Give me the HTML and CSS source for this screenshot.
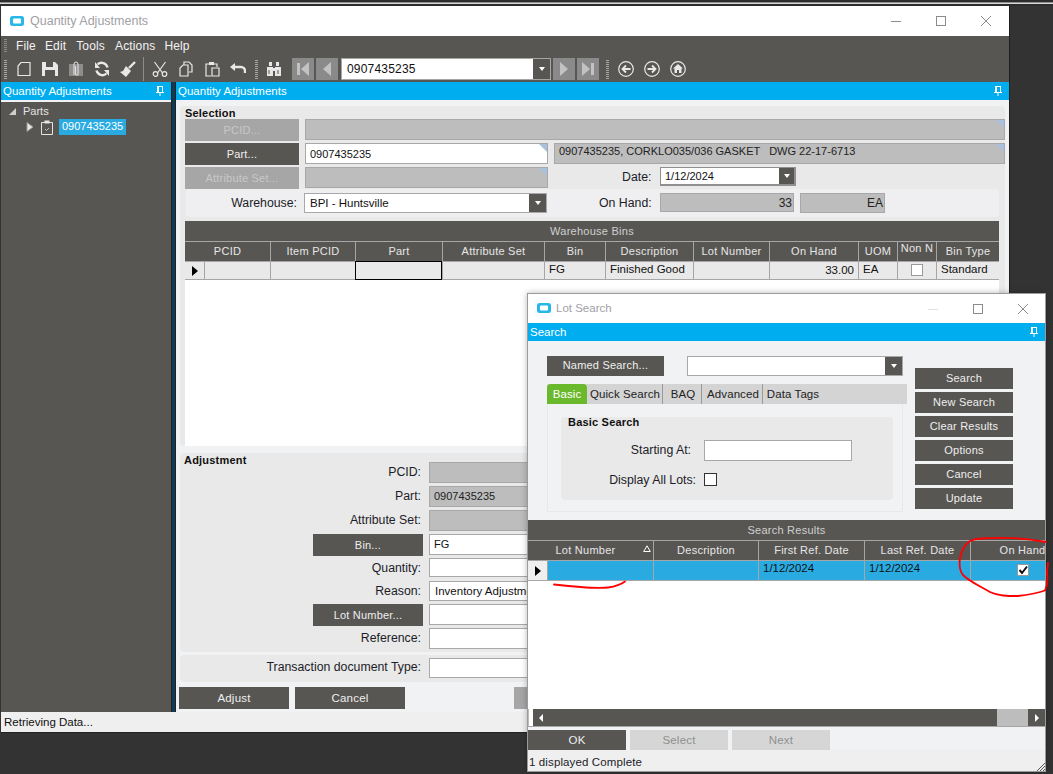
FILE: index.html
```html
<!DOCTYPE html>
<html lang="en">
<head>
<meta charset="utf-8">
<title>Quantity Adjustments</title>
<link rel="stylesheet" href="styles.css">
</head>
<body>
<div class="topstrip"></div>

<section class="win win-main">
  <header class="titlebar">
    <svg class="applogo" viewBox="0 0 14 10"><rect x="0" y="0" width="14" height="10" rx="2.5" fill="#29b6e8"/><rect x="3" y="2.5" width="8" height="5" rx="1" fill="#fff"/></svg>
    <span class="wintitle">Quantity Adjustments</span>
    <div class="wincontrols">
      <svg viewBox="0 0 12 12"><path d="M1 6.5h10" class="wc"/></svg>
      <svg viewBox="0 0 12 12"><rect x="1.5" y="1.5" width="9" height="9" class="wc"/></svg>
      <svg viewBox="0 0 12 12"><path d="M1 1l10 10M11 1L1 11" class="wc"/></svg>
    </div>
  </header>

  <div class="chrome">
    <nav class="menu"><span class="grip-s"></span><span>File</span><span>Edit</span><span>Tools</span><span>Actions</span><span>Help</span></nav>
    <div class="toolbar">
      <span class="grip g1"></span>
      <svg class="ic first" viewBox="0 0 16 16"><path class="ln" d="M5 1.5h9v13H2V5z"/></svg>
      <svg class="ic" viewBox="0 0 16 16"><path class="fl" d="M0 1h13l3 3v11H0z"/><rect x="4" y="1" width="7" height="5" fill="#585653"/><rect x="3" y="9" width="10" height="6" fill="#585653"/></svg>
      <svg class="ic" viewBox="0 0 16 16"><path class="fl2" d="M1 3h14v12H1z"/><path class="ln2" d="M6 14V3a2 2 0 0 1 4 0v10a1.2 1.2 0 0 1-2.400 0V5"/></svg>
      <svg class="ic" viewBox="0 0 16 16"><path class="thick" d="M13.500 6.500A6 6 0 0 0 3.500 3.500M2.500 9.500a6 6 0 0 0 10 3"/><path class="fl" d="M1 1v6h5zM15 15V9h-5z"/></svg>
      <svg class="ic" viewBox="0 0 16 16"><path class="thick" d="M15 1L9 7"/><path class="fl" d="M6 5l5 5-5 6-6-5 3-1z"/></svg>
      <span class="tsep"></span>
      <svg class="ic scis" viewBox="0 0 16 16"><path class="ln" d="M2.500 1l8 11M13.500 1l-8 11"/><circle class="ln" cx="3.500" cy="13" r="2.300"/><circle class="ln" cx="12.500" cy="13" r="2.300"/></svg>
      <svg class="ic" viewBox="0 0 16 16"><path class="ln" d="M6 4V1h5l3 3v7h-3M2 7l3-3h5v11H2z"/></svg>
      <svg class="ic" viewBox="0 0 16 16"><path class="ln" d="M5 3H2v12h5M10 3h3v3"/><rect class="fl" x="5" y="1" width="5" height="3"/><path class="ln" d="M8 7h7v8H8z"/></svg>
      <svg class="ic" viewBox="0 0 16 16"><path class="thick" d="M4 6h7a4 4 0 0 1 4 4v2"/><path class="fl" d="M0 6l5-4v8z"/></svg>
      <span class="grip g2"></span>
      <svg class="ic binoc" viewBox="0 0 16 16"><path class="fl" d="M1 6h6v9H1zM9 6h6v9H9zM3 1h3v4H3zM10 1h3v4h-3zM7 7h2v3H7z"/><path d="M3 9v4M12 9v4" stroke="#585653"/></svg>
      <span class="navbtn nb1"><svg viewBox="0 0 14 14"><rect x="1" y="1" width="3" height="12" class="nf"/><path d="M13 0v14L5 7z" class="nf"/></svg></span>
      <span class="navbtn"><svg viewBox="0 0 14 14"><path d="M11 0v14L3 7z" class="nf"/></svg></span>
      <div class="tcombo"><span class="tcval">0907435235</span><span class="drop"><i></i></span></div>
      <span class="navbtn nb2"><svg viewBox="0 0 14 14"><path d="M3 0v14l8-7z" class="nf"/></svg></span>
      <span class="navbtn"><svg viewBox="0 0 14 14"><path d="M1 0v14l8-7z" class="nf"/><rect x="10" y="1" width="3" height="12" class="nf"/></svg></span>
      <span class="grip g3"></span>
      <svg class="ic g4" viewBox="0 0 16 16"><circle class="ln" cx="8" cy="8" r="7.300"/><path class="arrow" d="M12.500 8H4.500M8 4.500L4.500 8 8 11.500"/></svg>
      <svg class="ic" viewBox="0 0 16 16"><circle class="ln" cx="8" cy="8" r="7.300"/><path class="arrow" d="M3.500 8h8M8 4.500L11.500 8 8 11.500"/></svg>
      <svg class="ic" viewBox="0 0 16 16"><circle class="ln" cx="8" cy="8" r="7.300"/><path class="fl" d="M8 3l5 4.500h-1.500V12H9V9H7v3H4.500V7.500H3z"/></svg>
    </div>
  </div>

  <div class="mainbody">
    <aside class="side">
      <div class="dockhead"><span>Quantity Adjustments</span><svg class="pin" viewBox="0 0 8 10"><path d="M1 0h6v6H6V1H3v5H1zM0 6h8v1H0zM3.500 7h1v3h-1z" fill="#fff"/></svg></div>
      <div class="sideline"></div>
      <div class="tree">
        <div class="tnode"><i class="tri-open"></i><span>Parts</span></div>
        <div class="tnode tchild">
          <svg class="texp" viewBox="0 0 8 10"><path d="M1 .5v9l6-4.500z" fill="#e8e8e8" stroke="#999"/></svg>
          <svg class="ticon" viewBox="0 0 12 15"><path d="M.5 2.500h11v12H.5z" fill="none" stroke="#e4e4e4"/><rect x="3.500" y="0.500" width="5" height="3" fill="#e4e4e4"/><path d="M4 9l1.500 1.500L8 8" fill="none" stroke="#bbb"/></svg>
          <span class="tsel">0907435235</span>
        </div>
      </div>
    </aside>
    <div class="divider"></div>
    <main class="content">
      <div class="dockhead"><span>Quantity Adjustments</span><svg class="pin" viewBox="0 0 8 10"><path d="M1 0h6v6H6V1H3v5H1zM0 6h8v1H0zM3.500 7h1v3h-1z" fill="#fff"/></svg></div>
      <div class="pane">
        <section class="group sel">
          <h3 class="gtitle">Selection</h3>
          <div class="selgrid">
            <span class="btn off">PCID...</span>
            <span class="field ro corner span2"></span>
            <span class="btn">Part...</span>
            <span class="field corner partf">0907435235</span>
            <span class="field ro corner descf">0907435235, CORKLO035/036 GASKET &nbsp; DWG 22-17-6713</span>
            <span class="btn off">Attribute Set...</span>
            <span class="field ro corner attrf"></span>
            <div class="daterow"><label>Date:</label><div class="datecombo"><span>1/12/2024</span><span class="drop"><i></i></span></div></div>
          </div>
          <div class="whrow">
            <label class="whlabel">Warehouse:</label>
            <div class="combo whcombo"><span>BPI - Huntsville</span><span class="drop"><i></i></span></div>
            <label class="ohlabel">On Hand:</label>
            <span class="field ro num ohf">33</span>
            <span class="field ro num eaf">EA</span>
          </div>
          <div class="bins">
            <div class="gridtitle">Warehouse Bins</div>
            <div class="gridhead binscols">
              <span class="headfirst">PCID</span><span>Item PCID</span><span>Part</span><span>Attribute Set</span><span>Bin</span><span>Description</span><span>Lot Number</span><span>On Hand</span><span>UOM</span><span class="nonn">Non N</span><span>Bin Type</span>
            </div>
            <div class="gridrow binscols binrow">
              <span class="rowsel"><i></i></span><span></span><span></span><span class="focus"></span><span></span><span class="l">FG</span><span class="l">Finished Good</span><span></span><span class="r">33.00</span><span class="l">EA</span><span class="c"><b class="chk"></b></span><span class="l">Standard</span>
            </div>
            <div class="gridfill"></div>
          </div>
        </section>

        <section class="group adj">
          <h3 class="gtitle">Adjustment</h3>
          <div class="adjgrid">
            <label>PCID:</label><span class="field ro"></span>
            <label>Part:</label><span class="field ro">0907435235</span>
            <label>Attribute Set:</label><span class="field ro"></span>
            <span class="btn adjbtn">Bin...</span><span class="field">FG</span>
            <label>Quantity:</label><span class="field slim"></span>
            <label>Reason:</label><span class="field slim reason">Inventory Adjustment</span>
            <span class="btn adjbtn">Lot Number...</span><span class="field"></span>
            <label>Reference:</label><span class="field"></span>
          </div>
        </section>

        <section class="group trans">
          <label>Transaction document Type:</label><span class="field slim"></span>
        </section>

        <div class="actions">
          <span class="btn act">Adjust</span>
          <span class="btn act">Cancel</span>
          <span class="btn act off third"></span>
        </div>
      </div>
    </main>
  </div>
  <footer class="status">Retrieving Data...</footer>
</section>

<section class="win win-lot">
  <header class="titlebar lotbar">
    <svg class="applogo" viewBox="0 0 14 10"><rect x="0" y="0" width="14" height="10" rx="2.500" fill="#29b6e8"/><rect x="3" y="2.500" width="8" height="5" rx="1" fill="#fff"/></svg>
    <span class="wintitle small">Lot Search</span>
    <div class="wincontrols lotctl">
      <svg viewBox="0 0 12 12"><path d="M1 6.500h10" class="wc faint"/></svg>
      <svg viewBox="0 0 12 12"><rect x="1.500" y="1.500" width="9" height="9" class="wc"/></svg>
      <svg viewBox="0 0 12 12"><path d="M1 1l10 10M11 1L1 11" class="wc"/></svg>
    </div>
  </header>
  <div class="dockhead lothead"><span>Search</span><svg class="pin" viewBox="0 0 8 10"><path d="M1 0h6v6H6V1H3v5H1zM0 6h8v1H0zM3.500 7h1v3h-1z" fill="#fff"/></svg></div>
  <div class="lotform">
    <div class="lotleft">
      <div class="namedrow">
        <span class="btn namedbtn">Named Search...</span>
        <div class="combo namedcombo"><span></span><span class="drop"><i></i></span></div>
      </div>
      <div class="tabs">
        <span class="tab on">Basic</span><span class="tab qs">Quick Search</span><span class="tab baq">BAQ</span><span class="tab adv">Advanced</span><span class="tab dt">Data Tags</span>
      </div>
      <div class="tabpanel">
        <div class="basic">
          <h3 class="gtitle">Basic Search</h3>
          <div class="basicgrid">
            <label class="sa">Starting At:</label><span class="field basicinput"></span>
            <label class="dal">Display All Lots:</label><b class="chk big"></b>
          </div>
        </div>
      </div>
    </div>
    <div class="lotbtns">
      <span class="btn lb">Search</span><span class="btn lb">New Search</span><span class="btn lb">Clear Results</span><span class="btn lb">Options</span><span class="btn lb">Cancel</span><span class="btn lb">Update</span>
    </div>
  </div>
  <div class="results">
    <div class="gridtitle">Search Results</div>
    <div class="gridhead lotcols">
      <span class="headfirst lotnum">Lot Number<svg class="sort" viewBox="0 0 8 7"><path d="M4 .8L7.300 6.500H.7z" fill="none" stroke="#fff"/></svg></span><span>Description</span><span>First Ref. Date</span><span>Last Ref. Date</span><span>On Hand</span>
    </div>
    <div class="gridrow lotcols selrow">
      <span class="rowsel"><i></i></span><span></span><span></span><span class="l">1/12/2024</span><span class="l">1/12/2024</span><span class="c"><b class="chk on"><svg viewBox="0 0 10 10"><path d="M1.500 5l2.500 3 5-6.500" fill="none" stroke="#111" stroke-width="2"/></svg></b></span>
    </div>
    <div class="gridfill"></div>
    <div class="hscroll">
      <span class="sthumb"></span>
      <span class="strack"><i class="al"></i></span>
      <span class="sgray"></span>
      <span class="sright"><i class="ar"></i></span>
    </div>
  </div>
  <div class="lotactions">
    <span class="btn la">OK</span><span class="btn la dim">Select</span><span class="btn la dim">Next</span>
  </div>
  <footer class="lotstatus">1 displayed Complete</footer>
  <svg class="sizegrip" viewBox="0 0 8 8"><path d="M0 8l8-8M3 8l5-5M6 8l2-2" stroke="#555" fill="none"/></svg>
</section>

<svg class="ink" viewBox="0 0 1053 774">
  <path d="M554 584.500C572 586.500 596 589 608 587.500C615 586.500 621 584.500 625 581.500"/>
  <path d="M1046 542C1030 539 1010 537.500 996 538C985 538 975 538 970 541C963 546 961 552 960 558C959 565 959 570 963 575C970 582 980 586 990 592C998 596 1008 596 1018 596C1028 595 1038 593 1045 590.500C1047 586 1048 580 1047 574C1047 570 1048 566 1048 563"/>
</svg>
</body>
</html>
```
FILE: styles.css
```css
* { box-sizing: border-box; }
html, body { margin: 0; height: 100%; }
body {
  background: #333;
  overflow: hidden;
  font: 12px "Liberation Sans", Arial, sans-serif;
  color: #1c1c28;
  position: relative;
  width: 1053px;
  height: 774px;
}
h3 { margin: 0; }
i, b { display: block; font-style: normal; }

.topstrip {
  height: 6px;
  background: linear-gradient(#2c2c2c 0 2px, #8f8f8f 2px 3px, #d8d8d8 3px 4px, #2c2c2c 4px 6px);
}

.win { position: absolute; display: flex; flex-direction: column; }
.win-main {
  left: 1px; top: 6px; width: 1008px; height: 726px;
  background: #f1f2f4;
  box-shadow: 1px 0 0 #1f1f1f, 0 1px 0 #222;
}
.win-lot {
  left: 527px; top: 293px; width: 519px; height: 479px;
  background: #f1f2f4;
  border: 1px solid #9b9b9b;
  box-shadow: 0 0 6px rgba(0,0,0,.28);
}

.titlebar { height: 30px; flex: none; background: #fff; display: flex; align-items: center; padding-left: 9px; }
.applogo { width: 14px; height: 10px; margin-right: 6px; }
.wintitle { font-size: 12.500px; color: #a0a0a6; }
.wintitle.small { font-size: 11.500px; padding-bottom: 2px; }
.wincontrols { margin-left: auto; display: flex; gap: 33px; padding-right: 17px; }
.wincontrols svg { width: 12px; height: 12px; }
.wc { fill: none; stroke: #8c8c8c; stroke-width: 1; }
.wc.faint { stroke: #e2e2e2; }

.chrome { height: 46px; flex: none; background: #585653; color: #f2f2f2; }
.menu { height: 20px; display: flex; align-items: center; padding-left: 3px; font-size: 12px; letter-spacing: .15px; }
.menu span { margin-right: 9px; }
.menu span:nth-child(2) { margin-left: 9px; }
.menu span:nth-child(3) { margin-right: 10px; }
.menu span:nth-child(4) { margin-right: 10px; }
.menu .grip-s { width: 3px; height: 14px; margin-right: 0; background: repeating-linear-gradient(#8a8a8a 0 1px, transparent 1px 2px); }
.toolbar { height: 26px; display: flex; align-items: center; padding-left: 3px; }
.grip { width: 3px; height: 19px; flex: none; background: repeating-linear-gradient(#a8a8a8 0 1px, transparent 1px 2px); }
.g2 { margin-left: 9px; }
.g3 { margin-left: 7px; }
.ic { width: 16px; height: 16px; flex: none; margin-left: 10px; }
.ic.first { margin-left: 9px; }
.ic.scis { margin-left: 8px; }
.ic.binoc { margin-left: 8px; }
.ic.g4 { margin-left: 9px; }
.tsep { width: 1px; height: 24px; background: #8e8c8a; margin-left: 7px; flex: none; }
.ln { fill: none; stroke: #e8e8e8; stroke-width: 1.200; }
.ln2 { fill: none; stroke: #e8e8e8; stroke-width: 1; }
.fl { fill: #e8e8e8; }
.fl2 { fill: #8f8d8b; }
.thick { fill: none; stroke: #e8e8e8; stroke-width: 2.400; }
.arrow { fill: none; stroke: #e8e8e8; stroke-width: 1.800; }
.navbtn { width: 22px; height: 22px; background: #8a8a8a; margin-left: 2px; display: flex; align-items: center; justify-content: center; flex: none; }
.navbtn svg { width: 14px; height: 14px; }
.nf { fill: #c2c2c2; }
.nb1 { margin-left: 10px; }
.nb2 { margin-left: 2px; }
.tcombo { width: 210px; height: 22px; margin-left: 3px; flex: none; display: flex; background: #fff; border: 1px solid #a5a5a5; color: #111; font-size: 12px; }
.tcval { flex: 1; padding: 3px 5px; letter-spacing: .2px; }
.drop { width: 17px; background: #585653; display: flex; align-items: center; justify-content: center; flex: none; }
.drop i { width: 0; height: 0; border: 3.500px solid transparent; border-top: 4px solid #fff; border-bottom: 0; }

.mainbody { flex: 1; min-height: 0; display: flex; }
.side { width: 170px; flex: none; background: #585653; }
.divider { width: 5px; flex: none; background: linear-gradient(90deg, #222 0 1px, #0d3b58 1px 4px, #222 4px); }
.content { flex: 1; min-width: 0; display: flex; flex-direction: column; }
.dockhead {
  height: 18px; flex: none; background: #00adef; color: #fff;
  display: flex; align-items: center; justify-content: space-between;
  padding: 0 7px 0 2px; font-size: 11.500px;
}
.pin { width: 8px; height: 10px; }
.sideline { height: 2px; background: #f1f2f4; }
.tree { color: #e4e4e4; font-size: 11px; padding-top: 1px; }
.tnode { display: flex; align-items: center; height: 16px; padding-left: 8px; }
.tri-open { width: 0; height: 0; border-style: solid; border-width: 0 0 7px 7px; border-color: transparent transparent #cfcfcf transparent; margin-right: 7px; }
.tchild { padding-left: 25px; }
.texp { width: 8px; height: 10px; margin-right: 7px; }
.ticon { width: 12px; height: 15px; margin-right: 6px; }
.tsel { background: #29abe2; color: #fff; height: 16px; padding: 1px 3px; font-size: 11px; width: 67px; }

.pane { flex: 1; min-height: 0; padding: 6px 4px 0; display: flex; flex-direction: column; }
.group { background: #e9e9e9; border-radius: 4px; }
.gtitle { font-size: 11px; font-weight: bold; color: #111; line-height: 12px; letter-spacing: .2px; }
.sel { height: 340px; padding: 1px 0 0 5px; flex: none; }
.selgrid { display: grid; grid-template-columns: 114px 243px 1fr; gap: 2px 6px; }
.span2 { grid-column: span 2; }
.btn {
  display: flex; align-items: center; justify-content: center; padding-bottom: 1px;
  background: #585653; color: #eee; height: 22px; font-size: 11px; letter-spacing: .2px; flex: none;
}
.btn.off { background: #a6a6a6; color: #c8c8c8; }
.field {
  display: block; height: 21px; background: #fff; border: 1px solid #a8a8a8;
  padding: 3px 4px; color: #111; font-size: 11px; line-height: 13px; position: relative; white-space: nowrap; overflow: hidden;
}
.field.ro { background: #bdbdbd; color: #222; }
.field.slim { height: 19px; }
.field.reason { height: 20px; padding-left: 5px; font-size: 11.500px; }
.corner::after {
  content: ""; position: absolute; right: -1px; top: -1px; width: 0; height: 0;
  border-style: solid; border-width: 0 10px 10px 0; border-color: transparent #a9c1df transparent transparent;
}
.partf { padding-top: 4px; }
.descf { padding-top: 1px; }
.daterow { display: flex; align-items: flex-start; }
.daterow label { margin-left: 68px; width: 38px; padding-top: 3px; font-size: 12.300px; }
.datecombo { width: 136px; height: 19px; border: 2px solid #8f8f8f; border-left-width: 1px; border-top-width: 1px; background: #fff; display: flex; color: #111; font-size: 11px; }
.datecombo span:first-child { flex: 1; padding: 2px 4px; }
.datecombo .drop { width: 15px; height: 100%; }
.whrow {
  display: flex; align-items: flex-start; height: 28px; width: 813px; margin: 0 0 4px 1px;
  background: #efeff1; border-radius: 4px; padding-top: 4px; font-size: 12.300px;
}
.whlabel { width: 111px; text-align: right; padding-top: 3px; }
.combo { display: flex; border: 1px solid #a8a8a8; background: #fff; color: #111; height: 20px; }
.combo span:first-child { flex: 1; padding: 3px 5px 1px; font-size: 11.500px; }
.whcombo { width: 243px; margin-left: 7px; }
.whcombo .drop, .namedcombo .drop { width: 17px; }
.ohlabel { margin-left: 52px; width: 61px; white-space: nowrap; padding-top: 3px; }
.ohf { width: 134px; height: 19px; padding-top: 3px; font-size: 12px; }
.num { text-align: right; padding-right: 1px; }
.eaf { width: 85px; height: 20px; margin-left: 6px; padding-top: 3px; font-size: 12px; }

.bins { width: 814px; height: 225px; display: flex; flex-direction: column; background: #fff; }
.gridtitle { height: 20px; background: #585653; color: #cfcfcf; display: flex; align-items: center; justify-content: center; flex: none; font-size: 11px; letter-spacing: .25px; }
.gridhead, .gridrow { display: grid; flex: none; }
.gridhead { height: 20px; background: #585653; color: #e6e6e6; border-top: 1px solid #a6a6a6; font-size: 11px; letter-spacing: .25px; }
.gridhead span { border-left: 1px solid #a6a6a6; display: flex; align-items: center; justify-content: center; white-space: nowrap; overflow: hidden; padding-bottom: 1px; }
.gridhead .headfirst { border-left: 0; grid-column: span 2; }
.gridrow { height: 20px; background: #e9e9e9; border-top: 1px solid #a6a6a6; border-bottom: 1px solid #a6a6a6; color: #111; font-size: 11.500px; }
.binrow { height: 19px; }
.gridrow span { border-left: 1px solid #a6a6a6; display: flex; align-items: center; white-space: nowrap; overflow: hidden; padding: 0 4px; }
.gridrow span:first-child { border-left: 0; }
.gridrow .l { padding-bottom: 3px; }
.gridrow .r { justify-content: flex-end; padding-bottom: 2px; }
.gridrow .c { justify-content: center; padding-bottom: 1px; }
.gridrow .focus { border: 1px solid #000; margin-top: -1px; margin-bottom: -1px; }
.rowsel { justify-content: center; padding: 0 !important; }
.rowsel i { width: 0; height: 0; border-style: solid; border-width: 5px 0 5px 6px; border-color: transparent transparent transparent #000; }
.binscols { grid-template-columns: 19px 66px 85px 87px 102px 61px 88px 76px 89px 39px 39px 63px; }
.nonn { align-items: flex-start !important; }
.chk { width: 12px; height: 12px; background: #fff; border: 1px solid #9a9a9a; }
.chk.big { width: 13px; height: 13px; border-color: #333; }
.chk.on svg { display: block; width: 10px; height: 10px; }
.gridfill { flex: 1; background: #fff; }

.adj { height: 199px; margin-top: 7px; flex: none; padding: 1px 0 0 4px; }
.adjgrid { display: grid; grid-template-columns: 239px 400px; column-gap: 6px; grid-template-rows: 24px 24px 24px 24px 23px 23px 24px 24px; margin-top: -4px; }
.adjgrid label { text-align: right; padding: 3px 2px 0 0; font-size: 12.300px; }
.adjbtn { width: 110px; justify-self: end; }
.trans { height: 27px; margin-top: 3px; display: grid; grid-template-columns: 241px 400px; column-gap: 8px; padding-top: 3px; flex: none; }
.trans label { text-align: right; padding-top: 2px; font-size: 12.300px; }
.trans .field { height: 20px; }
.actions { display: flex; gap: 6px; margin: 5px 0 0 -1px; }
.act { width: 110px; font-size: 11.500px; }
.third { margin-left: 103px; }

.status { height: 20px; flex: none; background: #efefef; padding: 4px 3px; color: #111; font-size: 11.500px; }

.lotbar { height: 29px; padding-left: 9px; }
.lotbar .applogo { margin-right: 5px; margin-bottom: 2px; }
.lotctl { gap: 33px; padding-right: 16px; }
.lothead { padding: 0 7px 0 2px; }
.lotform { height: 179px; flex: none; display: flex; padding-left: 19px; }
.lotleft { width: 360px; padding-top: 15px; }
.namedrow { display: flex; height: 20px; }
.namedbtn { width: 117px; height: 20px; padding-bottom: 2px; }
.namedcombo { width: 216px; margin-left: 23px; }
.tabs { display: flex; height: 20px; margin-top: 8px; background: #d4d4d4; color: #222; align-items: center; }
.tab { display: flex; align-items: center; justify-content: center; height: 20px; letter-spacing: .1px; font-size: 11.500px; padding-bottom: 1px; }
.tab.on { width: 40px; background: #6ab82c; color: #fff; border-radius: 4px 4px 0 0; }
.qs { width: 76px; padding-left: 1px; border-right: 1px solid #9a9a9a; }
.baq { width: 39px; padding-left: 2px; border-right: 1px solid #9a9a9a; }
.adv { width: 61px; padding-left: 2px; border-right: 1px solid #9a9a9a; }
.dt { width: 60px; }
.tabpanel { height: 108px; width: 356px; border: 1px solid #e8e8e8; border-top: 0; padding: 13px 0 0 13px; }
.basic { width: 332px; height: 83px; background: #e9e9e9; border-radius: 4px; padding: 0 0 0 7px; }
.basic .gtitle { line-height: 10px; }
.basicgrid { display: grid; grid-template-columns: 128px 148px; column-gap: 8px; margin-top: 13px; row-gap: 12px; align-items: start; }
.basicgrid label { text-align: right; font-size: 12.300px; padding-top: 3px; }
.basicgrid label.sa { padding-right: 5px; }
.basicgrid label.dal { padding-top: 0; }
.basicinput { height: 21px; }
.lotbtns { width: 98px; margin-left: 8px; padding-top: 27px; display: flex; flex-direction: column; gap: 3px; }
.lb { height: 21px; }

.results { height: 207px; flex: none; display: flex; flex-direction: column; background: #fff; border-bottom: 1px solid #a6a6a6; }
.lotcols { grid-template-columns: 19px 106px 105px 106px 106px 104px; width: 517px; overflow: hidden; }
.lotnum { position: relative; padding-right: 10px; }
.sort { position: absolute; right: 2px; top: 4px; width: 8px; height: 7px; }
.selrow { background: #29abe2; height: 21px; font-size: 11.500px; }
.gridrow.selrow .l { padding-bottom: 5px; }
.selrow .rowsel { background: #efefef; }
.hscroll { height: 17px; flex: none; display: flex; }
.sthumb { width: 5px; background: #fff; border-left: 1px solid #bbb; }
.strack { width: 464px; background: #585653; display: flex; align-items: center; padding-left: 6px; }
.al { border-style: solid; border-width: 4px 4px 4px 0; border-color: transparent #fff transparent transparent; width: 0; height: 0; }
.sgray { width: 31px; background: #bdbdbd; }
.sright { flex: 1; background: #585653; display: flex; align-items: center; justify-content: center; }
.ar { border-style: solid; border-width: 4px 0 4px 4px; border-color: transparent transparent transparent #fff; width: 0; height: 0; }
.lotactions { display: flex; gap: 4px; padding-top: 3px; height: 23px; flex: none; }
.la { width: 98px; height: 20px; font-size: 11.500px; }
.la.dim { background: #d6d6d6; color: #8f8f8f; }
.lotstatus { padding: 6px 1px 0; font-size: 11.500px; letter-spacing: .12px; background: #efefef; flex: 1; }
.sizegrip { position: absolute; right: 0; bottom: 0; width: 8px; height: 8px; }

.ink { position: absolute; left: 0; top: 0; width: 1053px; height: 774px; pointer-events: none; fill: none; stroke: #f00; stroke-width: 1.800; stroke-linecap: round; }
```
